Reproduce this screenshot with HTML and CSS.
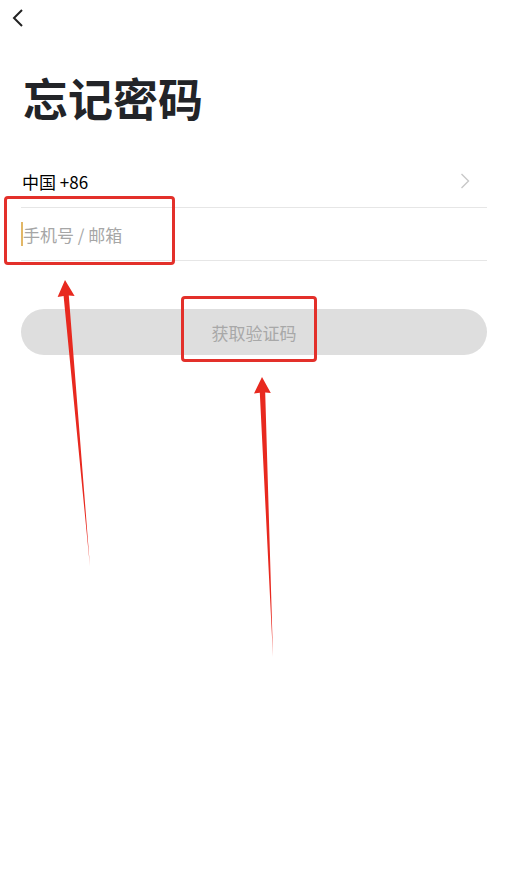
FILE: index.html
```html
<!DOCTYPE html>
<html lang="zh-CN">

<head>
    <meta charset="UTF-8">
    <meta name="viewport" content="width=device-width, initial-scale=1.0">
    <title>忘记密码</title>
    <link rel="stylesheet" href="styles.css">
</head>

<body>
    <div class="pagina">
        <div class="topo">
            <button class="voltar" aria-label="返回">
                <svg width="12" height="20" viewBox="0 0 12 20">
                    <path d="M10 2 L2 10 L10 18" fill="none" stroke="#222" stroke-width="2" />
                </svg>
            </button>
        </div>

        <h1 class="titulo">忘记密码</h1>

        <div class="formulario">
            <div class="linha linha-pais">
                <span>中国 +86</span>
                <svg width="10" height="18" viewBox="0 0 10 18">
                    <path d="M1.5 2 L8.5 9 L1.5 16" fill="none" stroke="#c8c8c8" stroke-width="1.4" />
                </svg>
            </div>
            <div class="linha">
                <span class="cursor"></span>
                <input class="campo" type="text" placeholder="手机号 / 邮箱">
            </div>
            <button class="botao">获取验证码</button>
        </div>

        <!-- marcações em vermelho -->
        <div class="marca marca-campo"></div>
        <div class="marca marca-botao"></div>
        <svg class="setas" width="512" height="890" viewBox="0 0 512 890">
            <polygon points="65,280 74.6,296 68.8,295.4 90,567 63.6,296 57.6,297" />
            <polygon points="262,377 270.8,393 265.2,392.6 273,657 259.8,392.8 254,393.6" />
        </svg>
    </div>
</body>

</html>
```

FILE: styles.css
```css
body {
    margin: 0;
    font-family: "Noto Sans CJK SC", "Noto Sans", sans-serif;
    background-color: #fff;
    color: #1f2024;
}

.pagina {
    position: relative;
    width: 512px;
    height: 890px;
    overflow: hidden;
}

.topo {
    height: 36px;
    padding-left: 12px;
}

.voltar {
    margin-top: 8px;
    padding: 0;
    border: none;
    background: none;
    display: block;
}

.titulo {
    margin: 26px 0 0 23px;
    font-size: 45px;
    line-height: 56px;
    font-weight: 700;
    color: #222428;
}

.formulario {
    margin: 29px 25px 0 21px;
}

.linha {
    height: 52px;
    display: flex;
    align-items: center;
    border-bottom: 1px solid #e6e6e6;
    font-size: 17px;
}

.linha-pais {
    justify-content: space-between;
    padding-left: 1px;
    padding-right: 17px;
    color: #000;
}

.cursor {
    width: 2px;
    height: 24px;
    background-color: #e2b767;
}

.campo {
    flex: 1;
    border: none;
    outline: none;
    padding: 0;
    font-family: inherit;
    font-size: 17px;
    background: none;
}

.campo::placeholder {
    color: #a6a6a6;
}

.botao {
    display: block;
    width: 100%;
    height: 46px;
    margin-top: 48px;
    border: none;
    border-radius: 23px;
    background-color: #dedede;
    color: #a8a8a8;
    font-family: inherit;
    font-size: 17px;
}

.marca {
    position: absolute;
    border: 3px solid #e3302a;
    border-radius: 4px;
}

.marca-campo {
    left: 4px;
    top: 196px;
    width: 165px;
    height: 63px;
}

.marca-botao {
    left: 181px;
    top: 296px;
    width: 130px;
    height: 60px;
}

.setas {
    position: absolute;
    left: 0;
    top: 0;
}

.setas polygon {
    fill: #e8291f;
}
```
